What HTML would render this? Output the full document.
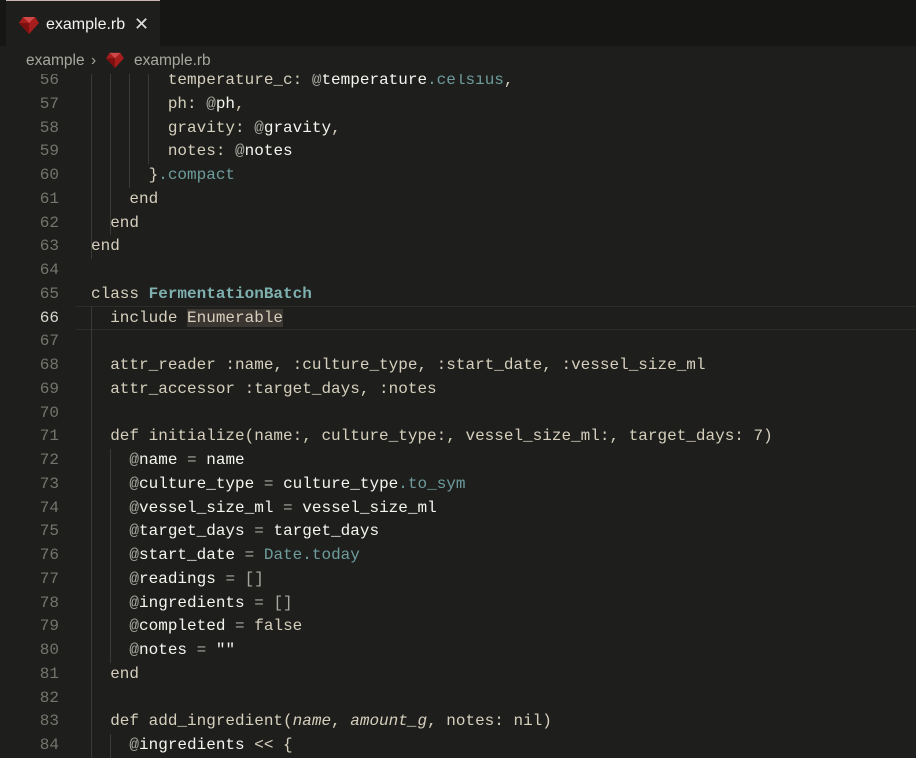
<!DOCTYPE html>
<html><head><meta charset="utf-8"><style>
body{margin:0;width:916px;height:758px;overflow:hidden;background:#1e1f1c;font-family:"Liberation Sans",sans-serif;position:relative}
.tabbar{position:absolute;left:0;top:0;width:916px;height:46px;background:#161714}
.tab{position:absolute;left:6px;top:0;width:154px;height:46px;background:#1e1f1c;border-top:1px solid #c9b3b3;box-sizing:border-box}
.tab span{position:absolute;left:40px;top:15px;color:#f2f2f2;font-size:16px}
.tab .x{left:128px;top:13px;font-size:18px;color:#ddd}
.crumb{position:absolute;left:0;top:46px;width:916px;height:28px;background:#1e1f1c;z-index:3;color:#a8a8a0;font-size:15.5px}
.crumb span{position:absolute;top:6px}
.gem{position:absolute}
.code{position:absolute;left:0;top:69px;width:916px;font-family:"Liberation Mono",monospace;font-size:16px;line-height:23.75px;color:#d6cfbd;white-space:pre}
.ln{position:absolute;left:0;width:59px;text-align:right;color:#75746d}
.tx{position:absolute;left:91px}
.cur{color:#d8d8d0}
.v{color:#f4f4f0}.o{color:#a8a8a0}.c{color:#7fb0b0;font-weight:bold}.m{color:#6e9c9c}.i{font-style:italic}
.g{position:absolute;width:1px;background:#3a3b36}
.hl{position:absolute;left:76px;top:306px;width:840px;height:24px;border-top:1px solid #2c2d29;border-bottom:1px solid #2c2d29;box-sizing:border-box}
.en{background:#3b3631}
</style></head><body>
<div class="tabbar"><div class="tab">
<svg class="gem" style="left:13px;top:15px" width="20" height="18" viewBox="0 0 20 18"><polygon points="4,1 16,1 20,7 10,18 0,7" fill="#a51d1d"/><polygon points="4,1 10,7 16,1" fill="#d04848"/><polygon points="0,7 10,7 10,18" fill="#7e1010"/></svg>
<span>example.rb</span><span class="x">✕</span></div></div>
<div class="crumb"><span style="left:26px">example</span><span style="left:91px">›</span>
<svg class="gem" style="left:106px;top:6px" width="18" height="16" viewBox="0 0 20 18"><polygon points="4,1 16,1 20,7 10,18 0,7" fill="#a51d1d"/><polygon points="4,1 10,7 16,1" fill="#d04848"/><polygon points="0,7 10,7 10,18" fill="#7e1010"/></svg>
<span style="left:134px">example.rb</span></div>
<div class="hl"></div>
<div class="g" style="left:91px;top:67px;height:192px"></div>
<div class="g" style="left:110px;top:67px;height:168px"></div>
<div class="g" style="left:129px;top:67px;height:121px"></div>
<div class="g" style="left:148px;top:67px;height:97px"></div>
<div class="g" style="left:91px;top:306px;height:452px"></div>
<div class="g" style="left:110px;top:449px;height:214px"></div>
<div class="g" style="left:110px;top:734px;height:24px"></div>
<div class="code">
<div class="ln" style="top:0">56
57
58
59
60
61
62
63
64
65
<span class="cur">66</span>
67
68
69
70
71
72
73
74
75
76
77
78
79
80
81
82
83
84</div>
<div class="tx" style="top:0">        temperature_c: <span class="o">@</span><span class="v">temperature</span><span class="m">.celsius</span>,
        ph: <span class="o">@</span><span class="v">ph</span>,
        gravity: <span class="o">@</span><span class="v">gravity</span>,
        notes: <span class="o">@</span><span class="v">notes</span>
      }<span class="m">.compact</span>
    end
  end
end

class <span class="c">FermentationBatch</span>
  include <span class="en">Enumerable</span>

  attr_reader :name, :culture_type, :start_date, :vessel_size_ml
  attr_accessor :target_days, :notes

  def initialize(name:, culture_type:, vessel_size_ml:, target_days: 7)
    <span class="o">@</span><span class="v">name</span> <span class="o">=</span> <span class="v">name</span>
    <span class="o">@</span><span class="v">culture_type</span> <span class="o">=</span> <span class="v">culture_type</span><span class="m">.to_sym</span>
    <span class="o">@</span><span class="v">vessel_size_ml</span> <span class="o">=</span> <span class="v">vessel_size_ml</span>
    <span class="o">@</span><span class="v">target_days</span> <span class="o">=</span> <span class="v">target_days</span>
    <span class="o">@</span><span class="v">start_date</span> <span class="o">=</span> <span class="m">Date.today</span>
    <span class="o">@</span><span class="v">readings</span> <span class="o">= []</span>
    <span class="o">@</span><span class="v">ingredients</span> <span class="o">= []</span>
    <span class="o">@</span><span class="v">completed</span> <span class="o">=</span> false
    <span class="o">@</span><span class="v">notes</span> <span class="o">=</span> <span class="v">""</span>
  end

  def add_ingredient(<span class="i">name</span>, <span class="i">amount_g</span>, notes: nil)
    <span class="o">@</span><span class="v">ingredients</span> &lt;&lt; {</div>
</div>
</body></html>
